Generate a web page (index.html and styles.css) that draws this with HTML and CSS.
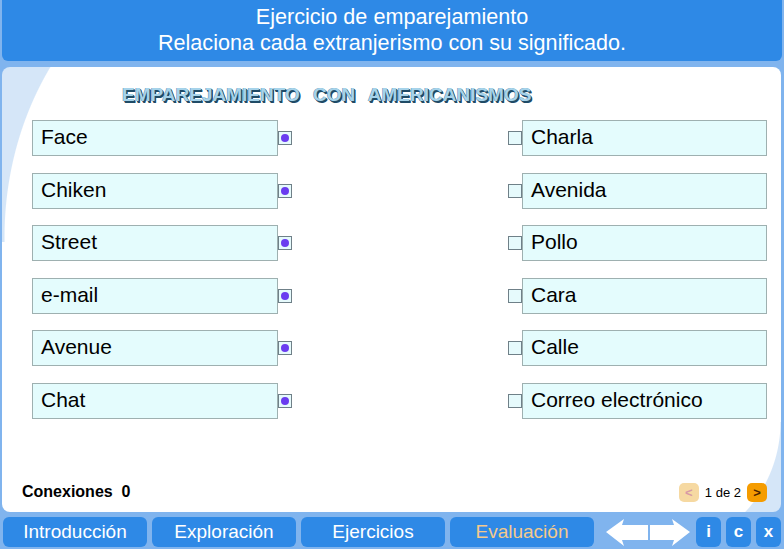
FILE: index.html
```html
<!DOCTYPE html>
<html lang="es">
<head>
<meta charset="utf-8">
<title>Ejercicio de emparejamiento</title>
<link rel="stylesheet" href="styles.css">
</head>
<body>
<div class="app">
  <header class="header">
    <div>Ejercicio de emparejamiento</div>
    <div>Relaciona cada extranjerismo con su significado.</div>
  </header>
  <main class="panel">
    <h1 class="title">EMPAREJAMIENTO CON AMERICANISMOS</h1>
    <div class="board">
      <div class="col">
        <div class="item"><div class="box">Face</div><span class="port"><span class="dot"></span></span></div>
        <div class="item"><div class="box">Chiken</div><span class="port"><span class="dot"></span></span></div>
        <div class="item"><div class="box">Street</div><span class="port"><span class="dot"></span></span></div>
        <div class="item"><div class="box">e-mail</div><span class="port"><span class="dot"></span></span></div>
        <div class="item"><div class="box">Avenue</div><span class="port"><span class="dot"></span></span></div>
        <div class="item"><div class="box">Chat</div><span class="port"><span class="dot"></span></span></div>
      </div>
      <div class="col">
        <div class="item"><span class="port"></span><div class="box">Charla</div></div>
        <div class="item"><span class="port"></span><div class="box">Avenida</div></div>
        <div class="item"><span class="port"></span><div class="box">Pollo</div></div>
        <div class="item"><span class="port"></span><div class="box">Cara</div></div>
        <div class="item"><span class="port"></span><div class="box">Calle</div></div>
        <div class="item"><span class="port"></span><div class="box">Correo electrónico</div></div>
      </div>
    </div>
    <div class="footer">
      <span class="count">Conexiones&nbsp; 0</span>
      <div class="pager">
        <span class="pbtn prev">&lt;</span>
        <span class="pinfo">1 de 2</span>
        <span class="pbtn next">&gt;</span>
      </div>
    </div>
  </main>
  <nav class="nav">
    <span class="tab">Introducción</span>
    <span class="tab">Exploración</span>
    <span class="tab">Ejercicios</span>
    <span class="tab active">Evaluación</span>
    <svg class="arrows" width="86" height="30" viewBox="0 0 86 30">
      <polygon points="1,15 19,2 17,8 43,8 43,23 17,23 19,29" fill="#fff"/>
      <polygon points="45,8 69,8 67,2 85,15 67,29 69,23 45,23" fill="#fff"/>
    </svg>
    <span class="sq first">i</span>
    <span class="sq">c</span>
    <span class="sq">x</span>
  </nav>
</div>
</body>
</html>
```
FILE: styles.css
```css
html, body {
  margin: 0;
  padding: 0;
}
body {
  background: #80b4ee;
  font-family: "Liberation Sans", Arial, sans-serif;
  width: 784px;
  height: 549px;
  overflow: hidden;
}
.app {
  width: 784px;
  height: 549px;
  display: flex;
  flex-direction: column;
}
.header {
  margin: 0 2px;
  height: 61px;
  box-sizing: border-box;
  padding-top: 4px;
  background: #2e89e6;
  color: #fff;
  font-size: 21.6px;
  line-height: 26px;
  text-align: center;
  border-radius: 0 0 6px 6px;
}
.panel {
  margin: 6px 3px 0 2px;
  height: 445px;
  box-sizing: border-box;
  border-radius: 8px;
  padding: 0 14px 0 30px;
  display: flex;
  flex-direction: column;
  background:
    radial-gradient(ellipse 260px 300px at 262px 170px, transparent 99.6%, #d5e6f8 100%) 0 0 / 270px 175px no-repeat,
    radial-gradient(circle 133px at 7px 0px, transparent 132px, #d5e6f8 133px) right bottom / 140px 90px no-repeat,
    #fff;
}
.title {
  margin: 17px 0 0 90px;
  font-size: 19px;
  line-height: 22px;
  font-weight: bold;
  color: #a6d3ea;
  word-spacing: 8px;
  text-shadow: 1px 1px 0 #1f4b66, 1.5px 1.5px 0 #1f4b66, -0.5px -0.5px 0 #5b8ca6;
}
.board {
  margin-top: 14px;
  display: flex;
  justify-content: space-between;
}
.col {
  display: flex;
  flex-direction: column;
  gap: 16.6px;
}
.item {
  display: flex;
  align-items: center;
}
.box {
  width: 246px;
  height: 36px;
  box-sizing: border-box;
  border: 1px solid #9eb0b0;
  background: #e4fcfd;
  font-size: 21px;
  line-height: 31px;
  padding-left: 8px;
  color: #000;
}
.col + .col .box {
  width: 245px;
}
.port {
  width: 14px;
  height: 14px;
  box-sizing: border-box;
  border: 1px solid #6f8088;
  background: #e6fafc;
  display: flex;
  align-items: center;
  justify-content: center;
}
.dot {
  width: 8px;
  height: 8px;
  border-radius: 50%;
  background: #6a3cf0;
}
.footer {
  margin-top: auto;
  margin-left: -10px;
  padding-bottom: 10px;
  height: 20px;
  display: flex;
  justify-content: space-between;
  align-items: center;
}
.count {
  font-size: 16px;
  font-weight: bold;
  color: #000;
}
.pager {
  display: flex;
  align-items: center;
  gap: 6px;
}
.pbtn {
  width: 20px;
  height: 19px;
  border-radius: 5px;
  display: flex;
  align-items: center;
  justify-content: center;
  font-size: 13px;
  font-weight: bold;
}
.prev {
  background: #f6d9a2;
  color: #d79aa6;
}
.next {
  background: #f59c00;
  color: #4a2400;
}
.pinfo {
  font-size: 13px;
  color: #000;
}
.nav {
  margin-top: 5px;
  height: 30px;
  display: flex;
  padding-left: 3px;
}
.tab {
  width: 144px;
  height: 30px;
  margin-right: 5px;
  border-radius: 6px;
  background: #2e89e6;
  color: #fff;
  font-size: 19px;
  line-height: 30px;
  text-align: center;
}
.tab.active {
  color: #f4c98c;
}
.arrows {
  margin-left: 6px;
  margin-right: 5px;
}
.sq {
  width: 25px;
  height: 30px;
  margin-left: 5px;
  border-radius: 6px;
  background: #2e89e6;
  color: #fff;
  font-size: 17px;
  font-weight: bold;
  line-height: 30px;
  text-align: center;
}
.sq.first {
  margin-left: 0;
}
```
